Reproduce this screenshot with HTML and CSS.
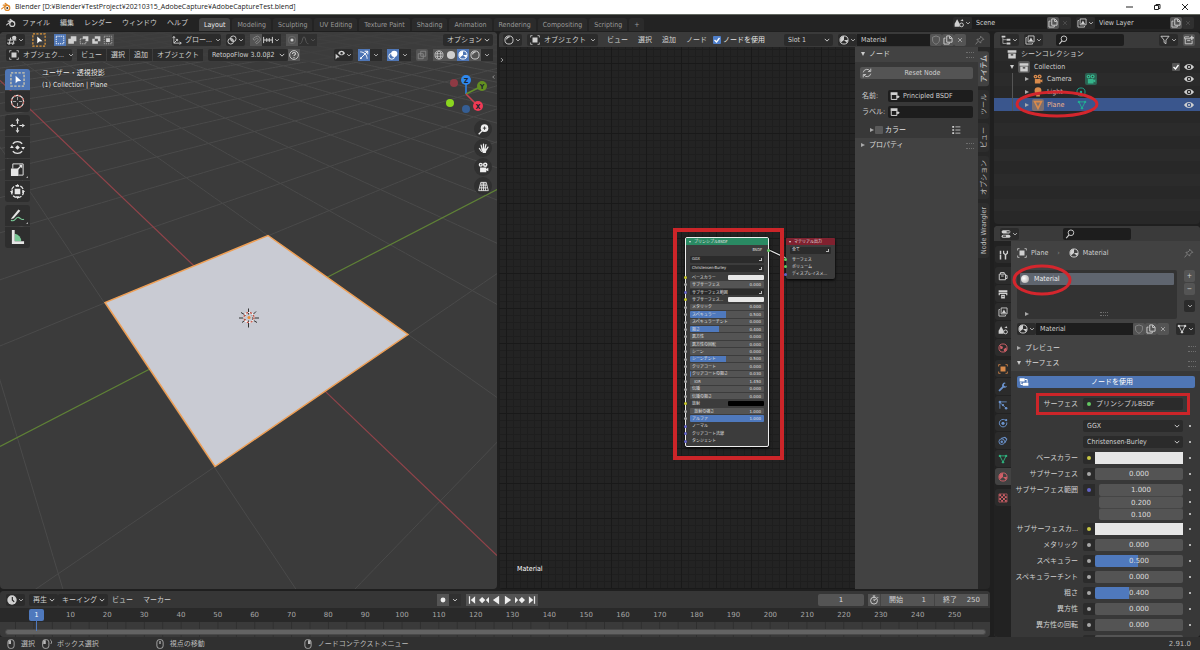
FILE: index.html
```html
<!DOCTYPE html>
<html lang="ja">
<head>
<meta charset="utf-8">
<title>Blender</title>
<link rel="stylesheet" href="styles.css">
</head>
<body>
<svg class="defs" aria-hidden="true">
  <symbol id="logo" viewBox="0 0 16 16"><path d="M1 11 8.500 5H3.500M6.500 2l6.500 4.800" fill="none" stroke="currentColor" stroke-width="1.800" stroke-linecap="round"/><circle cx="10" cy="9.500" r="4" fill="none" stroke="currentColor" stroke-width="2"/><circle cx="10" cy="9.500" r="1.600" class="hole"/></symbol>
  <symbol id="chev" viewBox="0 0 16 16"><path d="M3 5.500l5 5 5-5" fill="none" stroke="currentColor" stroke-width="2.200"/></symbol>
  <symbol id="view3d" viewBox="0 0 16 16"><path d="M1 8h14M0 13h12M6 4 3 16M11 9l-2 7" fill="none" stroke="currentColor" stroke-width="1.600"/><circle cx="11.500" cy="4.500" r="3.500" fill="currentColor"/></symbol>
  <symbol id="cursorbox" viewBox="0 0 16 16"><path d="M1 1h14v14H1z" fill="none" stroke="currentColor" stroke-width="1.400" stroke-dasharray="2.500 1.500"/><path d="M6 4v8l2.300-2.200L12 9.500z" fill="#fff"/></symbol>
  <symbol id="selbox" viewBox="0 0 16 16"><path d="M2 2h12v12H2z" fill="none" stroke="currentColor" stroke-width="1.500" stroke-dasharray="2 1.500"/></symbol>
  <symbol id="selext" viewBox="0 0 16 16"><path d="M6 2h9v8h-4v4H2V6h4z" fill="currentColor"/></symbol>
  <symbol id="selsub" viewBox="0 0 16 16"><path d="M6 2h9v8h-4V6H6z" fill="currentColor"/><path d="M2 6h9v8H2z" fill="none" stroke="currentColor" stroke-width="1.300" stroke-dasharray="2 1.500"/></symbol>
  <symbol id="selinv" viewBox="0 0 16 16"><path fill-rule="evenodd" d="M6 2h9v8h-4v4H2V6h4zM6 6v4h5V6z" fill="currentColor"/></symbol>
  <symbol id="selint" viewBox="0 0 16 16"><path d="M2 2h12v12H2z" fill="none" stroke="currentColor" stroke-dasharray="2 1.500"/><path d="M5 5h6v6H5z" fill="currentColor"/></symbol>
  <symbol id="axes" viewBox="0 0 16 16"><path d="M3 3v10h11M3 13 9 7M1 5l2-3 2 3M12 11l3 2-3 2M6 7h3v3" fill="none" stroke="currentColor" stroke-width="1.400"/></symbol>
  <symbol id="pivot" viewBox="0 0 16 16"><circle cx="6" cy="10" r="4.500" fill="none" stroke="currentColor" stroke-width="1.500"/><circle cx="10" cy="6" r="4.500" fill="none" stroke="currentColor" stroke-width="1.500"/><circle cx="8" cy="8" r="1.500" fill="currentColor"/></symbol>
  <symbol id="magnet" viewBox="0 0 16 16"><path d="M3 6l4-3a5 5 0 0 1 6 8l-4 3-2-2 4-3.500a2 2 0 0 0-2.500-3L5 8.500z" fill="none" stroke="currentColor" stroke-width="1.400"/></symbol>
  <symbol id="snapinc" viewBox="0 0 16 16"><path d="M1 3v10M15 3v10M6 5v6M10 5v6M1 8h14" fill="none" stroke="currentColor" stroke-width="1.600"/></symbol>
  <symbol id="prop" viewBox="0 0 16 16"><circle cx="8" cy="8" r="6" fill="none" stroke="#6c6c6c" stroke-width="1.500"/><circle cx="8" cy="8" r="2.500" fill="currentColor"/></symbol>
  <symbol id="lightdata" viewBox="0 0 16 16"><circle cx="8" cy="8" r="6.500" fill="none" stroke="currentColor" stroke-width="1.400"/><circle cx="8" cy="8" r="2" fill="currentColor"/></symbol>
  <symbol id="falloff" viewBox="0 0 16 16"><path d="M1 14c5 0 4-11 7-11s2 11 7 11" fill="none" stroke="currentColor" stroke-width="1.500"/></symbol>
  <symbol id="object" viewBox="0 0 16 16"><path d="M4 4h8v8H4z" fill="currentColor"/><path d="M1 4V1h3M12 1h3v3M15 12v3h-3M4 15H1v-3" fill="none" stroke="currentColor" stroke-width="1.200"/></symbol>
  <symbol id="help" viewBox="0 0 16 16"><circle cx="8" cy="8" r="7" fill="none" stroke="currentColor" stroke-width="1.400"/><path d="M5.500 6.500c0-3.500 5-3 5-.5 0 1.800-2.500 1.800-2.500 3.500M8 11v2" fill="none" stroke="currentColor" stroke-width="1.700"/></symbol>
  <symbol id="eye" viewBox="0 0 16 16"><path fill-rule="evenodd" d="M0 8c4-6.500 12-6.500 16 0-4 6.500-12 6.500-16 0zm8-3.500a3.500 3.500 0 1 0 0 7 3.500 3.500 0 0 0 0-7z" fill="currentColor"/><circle cx="8" cy="8" r="1.700" fill="currentColor"/></symbol>
  <symbol id="visib" viewBox="0 0 16 16"><path fill-rule="evenodd" d="M5 5c3-5 8-5 11 0-3 4.500-8 4.500-11 0zm5.500-2a2 2 0 1 0 0 4 2 2 0 0 0 0-4z" fill="currentColor"/><path d="M1 6v9l2.500-3 4-.500z" fill="currentColor"/></symbol>
  <symbol id="gizmo" viewBox="0 0 16 16"><path d="M2 3c6 0 11 5 11 11M2 14 14 2M9 2h5v5" fill="none" stroke="currentColor" stroke-width="1.500"/><circle cx="3" cy="13" r="1.500" fill="currentColor"/></symbol>
  <symbol id="overlay" viewBox="0 0 16 16"><circle cx="6" cy="10" r="4.700" fill="none" stroke="currentColor" stroke-width="1.500"/><circle cx="10" cy="6" r="5" fill="currentColor"/></symbol>
  <symbol id="xray" viewBox="0 0 16 16"><path d="M2 6h8v8H2zM6 2h8v8H6z" fill="none" stroke="currentColor" stroke-width="1.300"/></symbol>
  <symbol id="wire" viewBox="0 0 16 16"><g fill="none" stroke="currentColor" stroke-width="1.200"><circle cx="8" cy="8" r="6.500"/><ellipse cx="8" cy="8" rx="3" ry="6.500"/><path d="M2 6h12M2 10h12"/></g></symbol>
  <symbol id="solid" viewBox="0 0 16 16"><circle cx="8" cy="8" r="6.500" fill="currentColor"/></symbol>
  <symbol id="matball" viewBox="0 0 16 16"><circle cx="8" cy="8" r="6.500" fill="none" stroke="currentColor" stroke-width="1.500"/><path d="M8 1.500A6.500 6.500 0 0 0 3 12l5-4zM8 8l4.500 4.500A6.500 6.500 0 0 0 14.500 8z" fill="currentColor"/></symbol>
  <symbol id="render" viewBox="0 0 16 16"><circle cx="8" cy="8" r="6.500" fill="none" stroke="currentColor" stroke-width="1.500"/><path d="M4 7a5 5 0 0 1 5-4" fill="none" stroke="currentColor" stroke-width="1.800"/></symbol>
  <symbol id="copy" viewBox="0 0 16 16"><path d="M6 1.500h5l3.500 3.500v6.500H6zM10.500 2v3.500H14M4 5H1.500v9.500H10V12" fill="none" stroke="currentColor" stroke-width="1.500"/></symbol>
  <symbol id="x" viewBox="0 0 16 16"><path d="M3 3l10 10M13 3 3 13" stroke="currentColor" stroke-width="1.700"/></symbol>
  <symbol id="pin" viewBox="0 0 16 16"><path d="M9 2l5 5-2 .500-2.500 3L9 13 3 7l3-.500L9 4zM5 10l-4 5" fill="none" stroke="currentColor" stroke-width="1.300"/></symbol>
  <symbol id="shield" viewBox="0 0 16 16"><path d="M8 1.500l5.500 2V8c0 3-2 5-5.500 7C4.500 13 2.500 11 2.500 8V3.500z" fill="none" stroke="currentColor" stroke-width="1.300"/></symbol>
  <symbol id="scene" viewBox="0 0 16 16"><path d="M5 2l4 7v5H1V9z" fill="currentColor"/><circle cx="12" cy="11" r="3" fill="none" stroke="currentColor" stroke-width="1.500"/><path d="M10 4l4-2 1 3z" fill="currentColor"/></symbol>
  <symbol id="layers" viewBox="0 0 16 16"><path d="M5 1.500h9.500V11H5zM3 4H1.500v10.500H12V13" fill="none" stroke="currentColor" stroke-width="1.400"/><path d="M6 10l3.500-6L13 10z" fill="currentColor"/></symbol>
  <symbol id="tree" viewBox="0 0 16 16"><path d="M1 1h6v3H1zM9 6h6v3H9zM9 12h6v3H9z" fill="currentColor"/><path d="M3 4v9.500h6M3 7.500h6" fill="none" stroke="currentColor"/></symbol>
  <symbol id="search" viewBox="0 0 16 16"><circle cx="9.500" cy="6" r="4.500" fill="none" stroke="currentColor" stroke-width="1.500"/><path d="M6.500 9.500 2 14.500" stroke="currentColor" stroke-width="1.800"/></symbol>
  <symbol id="filter" viewBox="0 0 16 16"><path d="M1.500 2h13L9.500 8v6l-3-2V8z" fill="none" stroke="currentColor" stroke-width="1.400"/></symbol>
  <symbol id="box" viewBox="0 0 16 16"><path d="M1 2h14v4H1zM2 7h12v8H2z" fill="currentColor"/><path d="M6 9.500h4" stroke="#333" stroke-width="2"/></symbol>
  <symbol id="newbox" viewBox="0 0 16 16"><path d="M8 3H1v3h9M2 6v8h11v-5M5 9h5" fill="none" stroke="currentColor" stroke-width="1.400"/><path d="M12.500 1v7M9 4.500h7" stroke="currentColor" stroke-width="2"/></symbol>
  <symbol id="camera" viewBox="0 0 16 16"><circle cx="4" cy="4" r="3" fill="currentColor"/><circle cx="10.500" cy="4" r="3.300" fill="currentColor"/><path d="M3 8h9v2l3-1.500v5L12 12v3H3z" fill="currentColor"/><circle cx="4" cy="4" r="1" class="hole"/><circle cx="10.500" cy="4" r="1.200" class="hole"/></symbol>
  <symbol id="bulb" viewBox="0 0 16 16"><circle cx="8" cy="6" r="5.500" fill="currentColor"/><path d="M5 12h6v3H5z" fill="currentColor"/></symbol>
  <symbol id="mesh" viewBox="0 0 16 16"><path d="M3 3h10L8 13z" fill="none" stroke="currentColor" stroke-width="1.500"/><circle cx="3" cy="3" r="1.900" fill="currentColor"/><circle cx="13" cy="3" r="1.900" fill="currentColor"/><circle cx="8" cy="13" r="1.900" fill="currentColor"/></symbol>
  <symbol id="tri" viewBox="0 0 16 16"><path d="M2.500 2.500h11L8 13.500z" fill="none" stroke="currentColor" stroke-width="2.600"/></symbol>
  <symbol id="props" viewBox="0 0 16 16"><rect x="1" y="2" width="14" height="5" rx="2.500" fill="currentColor"/><rect x="1" y="9" width="14" height="5" rx="2.500" fill="currentColor"/><path d="M9 4.500h5M3 11.500h5" stroke="#333" stroke-width="2"/></symbol>
  <symbol id="tools" viewBox="0 0 16 16"><path d="M4 1v6M4 8v7M12 7v8" stroke="currentColor" stroke-width="2.400"/><path d="M9 1v4l3 2.500L15 5V1" fill="none" stroke="currentColor" stroke-width="2"/></symbol>
  <symbol id="rendercam" viewBox="0 0 16 16"><path d="M2 5h10v9H2zM12 7h2.500v5H12M4 5V2.500h6V5M5 8h4" fill="none" stroke="currentColor" stroke-width="1.500"/></symbol>
  <symbol id="printer" viewBox="0 0 16 16"><path d="M1 2h14v3H1zM1 6h14v4h-2V8H3v2H1zM5 9h6v6H5z" fill="currentColor"/><path d="M6 12h4" stroke="#333"/></symbol>
  <symbol id="world" viewBox="0 0 16 16"><circle cx="8" cy="8" r="6.500" fill="none" stroke="currentColor" stroke-width="1.500"/><path d="M3 4l5 2-1 3-3 1zM9 10l4-3 1 4-4 3z" fill="currentColor"/></symbol>
  <symbol id="wrench" viewBox="0 0 16 16"><path d="M2.500 13.500 9 7" stroke="currentColor" stroke-width="3" stroke-linecap="round"/><path d="M12.500 1.500A4 4 0 1 0 14.500 6L12 7 9.500 6V3.500z" fill="currentColor"/></symbol>
  <symbol id="particles" viewBox="0 0 16 16"><path d="M3 14V4l10 9M4 3h10" fill="none" stroke="currentColor" stroke-width="1.300"/><circle cx="3" cy="3" r="2" fill="currentColor"/><circle cx="8" cy="8" r="1.800" fill="currentColor"/><circle cx="13" cy="13" r="2" fill="currentColor"/></symbol>
  <symbol id="physics" viewBox="0 0 16 16"><path d="M11 3a6 6 0 1 0 3 4" fill="none" stroke="currentColor" stroke-width="1.500"/><circle cx="8" cy="8.500" r="2.500" fill="currentColor"/><circle cx="13" cy="3.500" r="1.800" fill="currentColor"/></symbol>
  <symbol id="constraint" viewBox="0 0 16 16"><circle cx="6" cy="9" r="4.500" fill="none" stroke="currentColor" stroke-width="1.500"/><circle cx="6" cy="9" r="2" fill="currentColor"/><path d="M5 4l6-2 3 3-3 6" fill="none" stroke="currentColor" stroke-width="1.700"/></symbol>
  <symbol id="checker" viewBox="0 0 16 16"><path d="M1.500 1.500h13v13h-13z" fill="none" stroke="currentColor"/><path d="M2 2h3v3H2zM8 2h3v3H8zM5 5h3v3H5zM11 5h3v3h-3zM2 8h3v3H2zM8 8h3v3H8zM5 11h3v3H5zM11 11h3v3h-3z" fill="currentColor"/></symbol>
  <symbol id="node" viewBox="0 0 16 16"><path d="M2 5.500h9v8H2z" fill="none" stroke="currentColor" stroke-width="1.600"/><path d="M1 2h11v4H1z" fill="currentColor"/><path d="M11 9h4" stroke="currentColor" stroke-width="2"/><circle cx="12.500" cy="9" r="2" fill="currentColor"/></symbol>
  <symbol id="nodes" viewBox="0 0 16 16"><path d="M1 2h8v5H1zM6 9h9v5H6z" fill="currentColor"/><path d="M9 4h4v5M6 12H3V8" fill="none" stroke="currentColor" stroke-width="1.600"/></symbol>
  <symbol id="refresh" viewBox="0 0 16 16"><path d="M2 7a6 6 0 0 1 11-2M14 9a6 6 0 0 1-11 2M14 1v4.500H9.500M2 15v-4.500h4.500" fill="none" stroke="currentColor" stroke-width="1.400"/></symbol>
  <symbol id="list" viewBox="0 0 16 16"><path d="M2 3h3M2 8h3M2 13h3" stroke="currentColor" stroke-width="2.500"/><path d="M7 3h8M7 8h8M7 13h8" stroke="currentColor" stroke-width="1.300"/></symbol>
  <symbol id="move" viewBox="0 0 16 16"><path d="M8 0l2 3H6zM8 16l2-3H6zM0 8l3-2v4zM16 8l-3-2v4z" fill="currentColor"/><path d="M8 3v3M8 10v3M3 8h3M10 8h3" stroke="currentColor" stroke-width="1.300"/></symbol>
  <symbol id="rotate" viewBox="0 0 16 16"><path d="M3 4a6.500 6.500 0 0 1 10 0M3 12a6.500 6.500 0 0 0 10 0" fill="none" stroke="currentColor" stroke-width="1.300"/><path d="M8 5.500 10.500 8 8 10.500 5.500 8zM0 8.500l2-3 2 3zM12 7.500h4l-2 3z" fill="currentColor"/></symbol>
  <symbol id="scale" viewBox="0 0 16 16"><path d="M3 7V2h11v12H9" fill="none" stroke="currentColor"/><path d="M1 7h8v8H1zM13 3v4L9.500 3z" fill="currentColor"/><path d="M8 8l4-4" stroke="currentColor" stroke-width="1.300"/></symbol>
  <symbol id="transform" viewBox="0 0 16 16"><circle cx="8" cy="8" r="6.500" fill="none" stroke="currentColor" stroke-width="1.300" stroke-dasharray="4 1.500"/><path d="M5 5h6v6H5zM8 0l2 3H6zM8 16l2-3H6zM0 8l3-2v4zM16 8l-3-2v4z" fill="currentColor"/></symbol>
  <symbol id="annotate" viewBox="0 0 16 16"><path d="M2 10 9 1.500l2 1.500-7 8-3 1z" fill="currentColor"/><path d="M1 13c4 3 5-4 8-3s2 3 6 2" fill="none" stroke="#79c695" stroke-width="1.200"/></symbol>
  <symbol id="measure" viewBox="0 0 16 16"><path d="M5 4a8 8 0 0 1 7 8H5z" fill="#79c695"/><path d="M2 0h3v12h10v3H2z" fill="currentColor"/></symbol>
  <symbol id="crosshair" viewBox="0 0 16 16"><circle cx="8" cy="8" r="6.500" fill="none" stroke="#e8e8e8" stroke-width="1.300"/><circle cx="8" cy="8" r="6.500" fill="none" stroke="#c86a62" stroke-width="1.300" stroke-dasharray="2.500 2.600"/><path d="M8 3v3.500M8 9.500V13M3 8h3.500M9.500 8H13" stroke="#aaa"/></symbol>
  <symbol id="zoomin" viewBox="0 0 16 16"><circle cx="9.500" cy="6" r="5.500" fill="currentColor"/><path d="M6 10l-5 5" stroke="currentColor" stroke-width="2"/><path d="M9.500 3.500v5M7 6h5" stroke="#333" stroke-width="1.300"/></symbol>
  <symbol id="hand" viewBox="0 0 16 16"><path d="M5 12 2 8M6 9 4.500 3M8 8V1.500M10 9l1.500-6.500M12 10l2.500-4" stroke="currentColor" stroke-width="1.800" stroke-linecap="round"/><path d="M4.500 8h8l-1 6.500H7z" fill="currentColor"/></symbol>
  <symbol id="persp" viewBox="0 0 16 16"><path d="M4 2h8l3 12H1zM8 2v12M3 6h10M2 10h12M6 2 5 14M10 2l1 12" fill="none" stroke="currentColor" stroke-width="1.200"/></symbol>
  <symbol id="clock" viewBox="0 0 16 16"><circle cx="8" cy="8" r="7.500" fill="currentColor"/><path d="M8.500 3v5l3 3" fill="none" stroke="#222" stroke-width="1.800"/></symbol>
  <symbol id="stopwatch" viewBox="0 0 16 16"><circle cx="8" cy="9" r="5.500" fill="none" stroke="currentColor" stroke-width="1.500"/><path d="M6 1.500h4M8 2v2M8 9l3-2.500M13 3l1.500 1.500M8 6v3" stroke="currentColor" stroke-width="1.500"/></symbol>
  <symbol id="jumpstart" viewBox="0 0 16 16"><path d="M3 2h2v12H3zM13 2v12L6 8z" fill="currentColor"/></symbol>
  <symbol id="keyprev" viewBox="0 0 16 16"><path d="M5 3l5 5-5 5-5-5zM16 3v10l-5-5z" fill="currentColor"/></symbol>
  <symbol id="playback" viewBox="0 0 16 16"><path d="M13 1v14L3 8z" fill="currentColor"/></symbol>
  <symbol id="mouseL" viewBox="0 0 16 16"><rect x="3" y="1" width="10" height="14" rx="4" fill="none" stroke="currentColor" stroke-width="1.300"/><path d="M4 2h4v6H4z" fill="currentColor"/></symbol>
  <symbol id="mousedrag" viewBox="0 0 16 16"><rect x="1" y="1" width="10" height="14" rx="4" fill="none" stroke="currentColor" stroke-width="1.300"/><path d="M2 2h4v6H2z" fill="currentColor"/><path d="M13 1c3 2 3 5 1 7" fill="none" stroke="currentColor" stroke-width="1.300"/></symbol>
  <symbol id="mouseM" viewBox="0 0 16 16"><rect x="3" y="1" width="10" height="14" rx="4" fill="none" stroke="currentColor" stroke-width="1.300"/><path d="M7 3h2v5H7z" fill="currentColor"/></symbol>
</svg>

<header class="titlebar">
  <svg class="ic orange"><use href="#logo"/></svg>
  <span class="title">Blender [D:¥Blender¥TestProject¥20210315_AdobeCapture¥AdobeCaptureTest.blend]</span>
  <button class="win" aria-label="最小化"><svg viewBox="0 0 8 8"><path d="M1 4h7"/></svg></button>
  <button class="win" aria-label="元に戻す"><svg viewBox="0 0 8 8"><path d="M1.500 2.500h4v4h-4zM3 2.500v-1h4v4H6"/></svg></button>
  <button class="win" aria-label="閉じる"><svg viewBox="0 0 8 8"><path d="M1 1l6 6M7 1 1 7"/></svg></button>
</header>

<nav class="topbar">
  <button class="logo-btn" aria-label="Blender"><svg class="ic"><use href="#logo"/></svg></button>
  <button class="menu">ファイル</button><button class="menu">編集</button><button class="menu">レンダー</button><button class="menu">ウィンドウ</button><button class="menu">ヘルプ</button>
  <div class="workspaces">
    <button class="ws on">Layout</button><button class="ws">Modeling</button><button class="ws">Sculpting</button><button class="ws">UV Editing</button><button class="ws">Texture Paint</button><button class="ws">Shading</button><button class="ws">Animation</button><button class="ws">Rendering</button><button class="ws">Compositing</button><button class="ws">Scripting</button><button class="ws">+</button>
  </div>
  <div class="idblock">
    <button class="b pair" aria-label="シーン"><svg class="ic"><use href="#scene"/></svg><svg class="ch"><use href="#chev"/></svg></button><input class="field" aria-label="シーン名" value="Scene"><button class="b lit sq" aria-label="新規シーン"><svg class="ic"><use href="#copy"/></svg></button><button class="b sq dim" aria-label="シーン削除"><svg class="ch"><use href="#x"/></svg></button>
  </div>
  <div class="idblock">
    <button class="b pair" aria-label="ビューレイヤー"><svg class="ic"><use href="#layers"/></svg><svg class="ch"><use href="#chev"/></svg></button><input class="field" aria-label="レイヤー名" value="View Layer"><button class="b lit sq" aria-label="新規レイヤー"><svg class="ic"><use href="#copy"/></svg></button><button class="b sq dim" aria-label="レイヤー削除"><svg class="ch"><use href="#x"/></svg></button>
  </div>
</nav>

<div class="work">
  <div class="left">
    <div class="editors">
      <section class="area viewport">
        <svg class="scene" viewBox="0 32 497 558" preserveAspectRatio="xMidYMid slice">
          <g id="floor"></g>
          <path d="M0 81 497 556" stroke="#91434a" stroke-width="1.200"/>
          <path d="M0 447 497 190" stroke="#5f8236" stroke-width="1.200"/>
          <path d="M268 236 408 335 215 467 105 303z" fill="#c9cbd3" stroke="#ee9f55" stroke-width="1.500"/>
          <path d="M241 313l5 3M252 320l5 3M242 323l4-3M252 316l4-4M248.500 309v6M248.500 321v7M239 318.500h6M252 318.500h7" stroke="#333" stroke-width="1"/>
          <circle cx="249" cy="318" r="5" fill="none" stroke="#fff" stroke-width="1.200"/><circle cx="249" cy="318" r="5" fill="none" stroke="#c34b3c" stroke-width="1.200" stroke-dasharray="2 2"/>
          <circle cx="249" cy="318" r="1.500" fill="#ee8a35"/>
        </svg>
        <div class="bar">
          <button class="b pair" aria-label="エディタータイプ"><svg class="ic"><use href="#view3d"/></svg><svg class="ch"><use href="#chev"/></svg></button>
          <button class="toolsel" aria-label="ボックス選択"><svg><use href="#cursorbox"/></svg></button>
          <div class="group modes"><button class="b sq blue" aria-label="設定"><svg class="ic"><use href="#selbox"/></svg></button><button class="b sq lit" aria-label="延長"><svg class="ic"><use href="#selext"/></svg></button><button class="b sq lit" aria-label="減算"><svg class="ic"><use href="#selsub"/></svg></button><button class="b sq lit" aria-label="反転"><svg class="ic"><use href="#selinv"/></svg></button><button class="b sq lit" aria-label="交差"><svg class="ic"><use href="#selint"/></svg></button></div>
          <button class="b orient"><svg class="ic"><use href="#axes"/></svg><span>グロー...</span><svg class="ch"><use href="#chev"/></svg></button>
          <button class="b pair" aria-label="ピボット"><svg class="ic"><use href="#pivot"/></svg><svg class="ch"><use href="#chev"/></svg></button>
          <div class="group"><button class="b sq lit muted" aria-label="スナップ"><svg class="ic"><use href="#magnet"/></svg></button><button class="b pair" aria-label="スナップ先"><svg class="ic"><use href="#snapinc"/></svg><svg class="ch"><use href="#chev"/></svg></button></div>
          <div class="group"><button class="b sq lit" aria-label="プロポーショナル編集"><svg class="ic"><use href="#prop"/></svg></button><button class="b pair dim" aria-label="減衰"><svg class="ic"><use href="#falloff"/></svg><svg class="ch"><use href="#chev"/></svg></button></div>
          <select class="sel push options" aria-label="オプション"><option>オプション</option></select>
        </div>
        <div class="bar second">
          <button class="b mode"><svg class="ic"><use href="#object"/></svg><span>オブジェク...</span><svg class="ch"><use href="#chev"/></svg></button>
          <div class="group menus"><button class="b">ビュー</button><button class="b">選択</button><button class="b">追加</button><button class="b">オブジェクト</button></div>
          <div class="group"><select class="sel retopo" aria-label="RetopoFlow"><option>RetopoFlow 3.0.0β2</option></select><button class="b sq lit" aria-label="ヘルプ"><svg class="ic"><use href="#help"/></svg></button></div>
          <button class="b pair push" aria-label="表示"><svg class="ic"><use href="#visib"/></svg><svg class="ch"><use href="#chev"/></svg></button>
          <div class="group"><button class="b sq blue" aria-label="ギズモ"><svg class="ic"><use href="#gizmo"/></svg></button><button class="b sq" aria-label="ギズモ設定"><svg class="ch"><use href="#chev"/></svg></button></div>
          <div class="group"><button class="b sq blue" aria-label="オーバーレイ"><svg class="ic"><use href="#overlay"/></svg></button><button class="b sq" aria-label="オーバーレイ設定"><svg class="ch"><use href="#chev"/></svg></button></div>
          <button class="b sq lit muted" aria-label="透過"><svg class="ic"><use href="#xray"/></svg></button>
          <div class="group"><button class="b sq lit" aria-label="ワイヤー"><svg class="ic"><use href="#wire"/></svg></button><button class="b sq lit" aria-label="ソリッド"><svg class="ic"><use href="#solid"/></svg></button><button class="b sq blue" aria-label="マテリアル"><svg class="ic"><use href="#matball"/></svg></button><button class="b sq lit" aria-label="レンダー"><svg class="ic"><use href="#render"/></svg></button><button class="b sq" aria-label="シェーディング設定"><svg class="ch"><use href="#chev"/></svg></button></div>
        </div>
        <div class="stage">
          <div class="tools">
            <div class="toolgroup"><button class="tool on" aria-label="選択"><svg><use href="#cursorbox"/></svg></button><button class="tool" aria-label="カーソル"><svg><use href="#crosshair"/></svg></button></div>
            <div class="toolgroup"><button class="tool" aria-label="移動"><svg><use href="#move"/></svg></button><button class="tool" aria-label="回転"><svg><use href="#rotate"/></svg></button><button class="tool more" aria-label="拡大縮小"><svg><use href="#scale"/></svg></button><button class="tool" aria-label="トランスフォーム"><svg><use href="#transform"/></svg></button></div>
            <div class="toolgroup"><button class="tool more" aria-label="アノテート"><svg><use href="#annotate"/></svg></button><button class="tool" aria-label="メジャー"><svg><use href="#measure"/></svg></button></div>
          </div>
          <div class="viewinfo"><div>ユーザー・透視投影</div><div>(1) Collection | Plane</div></div>
          <div class="navs">
            <svg class="gizmo" viewBox="445 72 44 42">
              <path d="M466 94V80" stroke="#2e83e6" stroke-width="1.600"/><path d="M466 94l16-8" stroke="#648f2c" stroke-width="1.600"/><path d="M466 94l12 12" stroke="#c8414f" stroke-width="1.600"/>
              <circle cx="454" cy="83" r="4" fill="#8e3a44"/><circle cx="450" cy="103" r="4" fill="#8bd61f"/><circle cx="466" cy="109" r="4" fill="#355e94"/>
              <circle cx="466" cy="80" r="5" fill="#2e88ee"/><circle cx="482" cy="86" r="5" fill="#648f20"/><circle cx="478" cy="106" r="5" fill="#f03a55"/>
              <text x="466" y="83">Z</text><text x="482" y="89">Y</text><text x="478" y="109">X</text>
            </svg>
            <button class="round" aria-label="ズーム"><svg><use href="#zoomin"/></svg></button><button class="round" aria-label="移動"><svg><use href="#hand"/></svg></button><button class="round" aria-label="カメラ"><svg><use href="#camera"/></svg></button><button class="round" aria-label="透視投影"><svg><use href="#persp"/></svg></button>
          </div>
          <svg class="edge right"><use href="#chev"/></svg>
        </div>
      </section>

      <section class="area nodes">
        <div class="bar">
          <button class="b pair" aria-label="シェーダーエディター"><svg class="ic"><use href="#render"/></svg><svg class="ch"><use href="#chev"/></svg></button>
          <button class="b mode wide"><svg class="ic"><use href="#object"/></svg><span>オブジェクト</span><svg class="ch"><use href="#chev"/></svg></button>
          <div class="flatmenus"><button>ビュー</button><button>選択</button><button>追加</button><button>ノード</button></div>
          <label class="check"><input type="checkbox" checked>ノードを使用</label>
          <select class="sel slot" aria-label="スロット"><option>Slot 1</option></select>
          <div class="idblock mat">
            <button class="b pair" aria-label="マテリアル"><svg class="ic"><use href="#matball"/></svg><svg class="ch"><use href="#chev"/></svg></button><input class="field" aria-label="マテリアル名" value="Material"><button class="b lit sq muted" aria-label="フェイクユーザー"><svg class="ic"><use href="#shield"/></svg></button><button class="b lit sq" aria-label="複製"><svg class="ic"><use href="#copy"/></svg></button><button class="b lit sq" aria-label="解除"><svg class="ch"><use href="#x"/></svg></button>
          </div>
          <svg class="ic pinned"><use href="#pin"/></svg>
        </div>
        <div class="nodebody">
          <div class="canvas">
            <svg class="edge left"><use href="#chev"/></svg>
            <svg class="link" viewBox="0 0 20 10"><path d="M1 1l17 8" stroke="#111" stroke-width="3"/><path d="M1 1l17 8" stroke="#e4e4e4" stroke-width="1.300"/></svg>
            <article class="node principled">
              <h3>プリンシプルBSDF</h3>
              <div class="out">BSDF</div>
              <div class="drop">GGX</div><div class="drop">Christensen-Burley</div>
              <div class="rows">
                <div class="r col y"><span>ベースカラー</span><i></i></div>
                <div class="r v"><span>サブサーフェス</span><b>0.000</b></div>
                <div class="r dd p"><span>サブサーフェス範囲</span></div>
                <div class="r col y"><span>サブサーフェス...</span><i></i></div>
                <div class="r v"><span>メタリック</span><b>0.000</b></div>
                <div class="r v" style="--v:49%"><span>スペキュラー</span><b>0.500</b></div>
                <div class="r v"><span>スペキュラーチント</span><b>0.000</b></div>
                <div class="r v" style="--v:39%"><span>粗さ</span><b>0.400</b></div>
                <div class="r v"><span>異方性</span><b>0.000</b></div>
                <div class="r v"><span>異方性の回転</span><b>0.000</b></div>
                <div class="r v"><span>シーン</span><b>0.000</b></div>
                <div class="r v" style="--v:49%"><span>シーンチント</span><b>0.500</b></div>
                <div class="r v"><span>クリアコート</span><b>0.000</b></div>
                <div class="r v" style="--v:2%"><span>クリアコートの粗さ</span><b>0.030</b></div>
                <div class="r v"><span>&nbsp; IOR</span><b>1.450</b></div>
                <div class="r v"><span>伝播</span><b>0.000</b></div>
                <div class="r v"><span>伝播の粗さ</span><b>0.000</b></div>
                <div class="r col y black"><span>放射</span><i></i></div>
                <div class="r v"><span>&nbsp; 放射の強さ</span><b>1.000</b></div>
                <div class="r v" style="--v:100%"><span>アルファ</span><b>1.000</b></div>
                <div class="r p"><span>ノーマル</span></div>
                <div class="r p"><span>クリアコート法線</span></div>
                <div class="r p"><span>タンジェント</span></div>
              </div>
            </article>
            <article class="node output">
              <h3>マテリアル出力</h3>
              <div class="drop">全て</div>
              <div class="rows"><div class="r g"><span>サーフェス</span></div><div class="r g"><span>ボリューム</span></div><div class="r p"><span>ディスプレイスメ...</span></div></div>
            </article>
            <div class="mark markbox"></div>
            <div class="matname">Material</div>
          </div>
          <aside class="side">
            <h2 class="open">ノード</h2>
            <div class="sidebody">
              <button class="b lit reset"><svg class="ic"><use href="#refresh"/></svg><span>Reset Node</span></button>
              <label class="nrow"><span>名前:</span><span class="iconfield"><svg class="ic"><use href="#node"/></svg><input value="Principled BSDF"></span></label>
              <label class="nrow"><span>ラベル:</span><span class="iconfield"><svg class="ic"><use href="#node"/></svg><input value=""></span></label>
              <div class="colorrow"><i class="arrow"></i><label class="check off"><input type="checkbox">カラー</label><svg class="ic"><use href="#list"/></svg></div>
            </div>
            <h2 class="closed">プロパティ</h2>
          </aside>
          <div class="vtabs"><button class="on">アイテム</button><button>ツール</button><button>ビュー</button><button>オプション</button><button>Node Wrangler</button></div>
        </div>
      </section>
    </div>

    <section class="area timeline">
      <div class="bar">
        <button class="b pair" aria-label="タイムライン"><svg class="ic"><use href="#clock"/></svg><svg class="ch"><use href="#chev"/></svg></button>
        <div class="group"><select class="sel play" aria-label="再生"><option>再生</option></select><select class="sel keying" aria-label="キーイング"><option>キーイング</option></select></div>
        <div class="flatmenus"><button>ビュー</button><button>マーカー</button></div>
        <div class="transport">
          <div class="group"><button class="b lit sq" aria-label="自動キー"><svg class="ch"><use href="#solid"/></svg></button><button class="b sq dim" aria-label="自動キー設定"><svg class="ch"><use href="#chev"/></svg></button></div>
          <div class="group"><button class="b lit sq" aria-label="最初"><svg class="ic"><use href="#jumpstart"/></svg></button><button class="b lit sq" aria-label="前のキー"><svg class="ic"><use href="#keyprev"/></svg></button><button class="b lit sq" aria-label="逆再生"><svg class="ic"><use href="#playback"/></svg></button><button class="b lit sq flip" aria-label="再生"><svg class="ic"><use href="#playback"/></svg></button><button class="b lit sq flip" aria-label="次のキー"><svg class="ic"><use href="#keyprev"/></svg></button><button class="b lit sq flip" aria-label="最後"><svg class="ic"><use href="#jumpstart"/></svg></button></div>
        </div>
        <input class="num frame" aria-label="現在フレーム" value="1">
        <div class="group"><button class="b lit sq" aria-label="プレビュー範囲"><svg class="ic"><use href="#stopwatch"/></svg></button><label class="range">開始<input value="1"></label><label class="range">終了<input value="250"></label></div>
      </div>
      <div class="frames">
        <div class="ruler"><span>10</span><span>20</span><span>30</span><span>40</span><span>50</span><span>60</span><span>70</span><span>80</span><span>90</span><span>100</span><span>110</span><span>120</span><span>130</span><span>140</span><span>150</span><span>160</span><span>170</span><span>180</span><span>190</span><span>200</span><span>210</span><span>220</span><span>230</span><span>240</span><span>250</span></div>
        <div class="track"><div class="scroll"></div></div>
        <div class="playhead">1</div>
      </div>
    </section>
  </div>

  <div class="right">
    <section class="area outliner">
      <div class="bar">
        <button class="b pair" aria-label="アウトライナー"><svg class="ic"><use href="#tree"/></svg><svg class="ch"><use href="#chev"/></svg></button>
        <button class="b pair" aria-label="表示モード"><svg class="ic"><use href="#layers"/></svg><svg class="ch"><use href="#chev"/></svg></button>
        <label class="search"><svg class="ic"><use href="#search"/></svg><input aria-label="検索"></label>
        <button class="b pair filt" aria-label="フィルター"><svg class="ic"><use href="#filter"/></svg><svg class="ch"><use href="#chev"/></svg></button>
        <button class="b sq lit" aria-label="新規コレクション"><svg class="ic"><use href="#newbox"/></svg></button>
      </div>
      <ul class="list">
        <li class="l0"><svg class="ic"><use href="#box"/></svg>シーンコレクション</li>
        <li class="l1"><i class="arrow down"></i><span class="chip"><svg class="ic"><use href="#box"/></svg></span>Collection<input class="vis" type="checkbox" checked aria-label="ビューレイヤーに含む"><svg class="ic"><use href="#eye"/></svg></li>
        <li class="l2"><i class="arrow"></i><svg class="ic kind or"><use href="#camera"/></svg>Camera<span class="chip green data"><svg class="ic"><use href="#camera"/></svg></span><svg class="ic eye"><use href="#eye"/></svg></li>
        <li class="l2"><i class="arrow"></i><svg class="ic kind or"><use href="#bulb"/></svg>Light<svg class="ic teal data"><use href="#lightdata"/></svg><svg class="ic eye"><use href="#eye"/></svg></li>
        <li class="l2 active"><i class="arrow"></i><span class="chip kind or"><svg class="ic"><use href="#tri"/></svg></span><em>Plane</em><svg class="ic teal data"><use href="#mesh"/></svg><svg class="ic eye"><use href="#eye"/></svg><svg class="mark ring" viewBox="0 0 84 28"><ellipse cx="42" cy="14" rx="40" ry="12"/></svg></li>
        <li></li><li></li><li></li><li></li><li></li><li></li><li></li><li></li><li></li>
      </ul>
    </section>

    <section class="area properties">
      <div class="bar">
        <button class="b pair" aria-label="プロパティ"><svg class="ic"><use href="#props"/></svg><svg class="ch"><use href="#chev"/></svg></button>
        <label class="search"><svg class="ic"><use href="#search"/></svg><input aria-label="検索"></label>
      </div>
      <div class="pbody">
        <nav class="ptabs">
          <div><button aria-label="ツール"><svg class="ic"><use href="#tools"/></svg></button></div>
          <div><button aria-label="レンダー"><svg class="ic"><use href="#rendercam"/></svg></button><button aria-label="出力"><svg class="ic"><use href="#printer"/></svg></button><button aria-label="ビューレイヤー"><svg class="ic"><use href="#layers"/></svg></button><button aria-label="シーン"><svg class="ic"><use href="#scene"/></svg></button><button class="red" aria-label="ワールド"><svg class="ic"><use href="#world"/></svg></button></div>
          <div><button class="or" aria-label="オブジェクト"><svg class="ic"><use href="#object"/></svg></button><button class="bl" aria-label="モディファイアー"><svg class="ic"><use href="#wrench"/></svg></button><button class="bl" aria-label="パーティクル"><svg class="ic"><use href="#particles"/></svg></button><button class="bl" aria-label="物理演算"><svg class="ic"><use href="#physics"/></svg></button><button class="bl" aria-label="コンストレイント"><svg class="ic"><use href="#constraint"/></svg></button><button class="gr" aria-label="データ"><svg class="ic"><use href="#mesh"/></svg></button><button class="red on" aria-label="マテリアル"><svg class="ic"><use href="#matball"/></svg></button></div>
          <div><button class="red" aria-label="テクスチャ"><svg class="ic"><use href="#checker"/></svg></button></div>
        </nav>
        <div class="pcontent">
          <div class="crumb"><svg class="ic"><use href="#object"/></svg>Plane<span class="sep">›</span><svg class="ic"><use href="#matball"/></svg>Material<svg class="ic pinned"><use href="#pin"/></svg></div>
          <div class="slots">
            <div class="slotbox"><div class="slotrow"><span class="ball"></span>Material</div><div class="slotfoot"><i class="arrow"></i><i class="grip"></i></div>
              <svg class="mark ring2" viewBox="0 0 60 32"><ellipse cx="30" cy="16" rx="28" ry="14"/></svg></div>
            <div class="slotbtns"><button class="b lit">+</button><button class="b lit">−</button><button class="b gap" aria-label="メニュー"><svg class="ch"><use href="#chev"/></svg></button></div>
          </div>
          <div class="matrow">
            <div class="idblock"><button class="b pair" aria-label="マテリアル"><svg class="ic"><use href="#matball"/></svg><svg class="ch"><use href="#chev"/></svg></button><input class="field" aria-label="マテリアル名" value="Material"><button class="b lit sq muted" aria-label="フェイクユーザー"><svg class="ic"><use href="#shield"/></svg></button><button class="b lit sq" aria-label="複製"><svg class="ic"><use href="#copy"/></svg></button><button class="b lit sq" aria-label="解除"><svg class="ch"><use href="#x"/></svg></button></div>
            <button class="b pair" aria-label="リンク"><svg class="ic"><use href="#mesh"/></svg><svg class="ch"><use href="#chev"/></svg></button>
          </div>
          <h2 class="closed">プレビュー</h2>
          <h2 class="open">サーフェス</h2>
          <div class="surface">
            <button class="b blue usenodes"><svg class="ic"><use href="#nodes"/></svg><span>ノードを使用</span></button>
            <div class="prow first"><label for="surf">サーフェス</label><button class="b surf" id="surf"><i class="dot lime"></i>プリンシプルBSDF</button><div class="mark markrow"></div></div>
            <div class="prow nolabel"><select class="sel" aria-label="分布"><option>GGX</option></select><i class="key"></i></div>
            <div class="prow nolabel"><select class="sel" aria-label="サブサーフェス方式"><option>Christensen-Burley</option></select><i class="key"></i></div>
            <div class="prow"><label for="c1">ベースカラー</label><i class="sock yel"></i><button class="swatch" id="c1"></button><i class="key"></i></div>
            <div class="prow"><label for="f1">サブサーフェス</label><i class="sock"></i><input class="num" id="f1" value="0.000"><i class="key"></i></div>
            <div class="prow triple"><label for="f2">サブサーフェス範囲</label><i class="sock pur"></i><div class="stack"><input class="num" id="f2" value="1.000"><input class="num" aria-label="G" value="0.200"><input class="num" aria-label="B" value="0.100"></div><div class="keys"><i class="key"></i><i class="key"></i><i class="key"></i></div></div>
            <div class="prow"><label for="c2">サブサーフェスカ...</label><i class="sock yel"></i><button class="swatch" id="c2"></button><i class="key"></i></div>
            <div class="prow"><label for="f3">メタリック</label><i class="sock"></i><input class="num" id="f3" value="0.000"><i class="key"></i></div>
            <div class="prow"><label for="f4">スペキュラー</label><i class="sock"></i><input class="num" id="f4" value="0.500" style="--v:49%"><i class="key"></i></div>
            <div class="prow"><label for="f5">スペキュラーチント</label><i class="sock"></i><input class="num" id="f5" value="0.000"><i class="key"></i></div>
            <div class="prow"><label for="f6">粗さ</label><i class="sock"></i><input class="num" id="f6" value="0.400" style="--v:39%"><i class="key"></i></div>
            <div class="prow"><label for="f7">異方性</label><i class="sock"></i><input class="num" id="f7" value="0.000"><i class="key"></i></div>
            <div class="prow"><label for="f8">異方性の回転</label><i class="sock"></i><input class="num" id="f8" value="0.000"><i class="key"></i></div>
            <div class="prow"><label for="f9">シーン</label><i class="sock"></i><input class="num" id="f9" value="0.000"><i class="key"></i></div>
          </div>
        </div>
      </div>
    </section>
  </div>
</div>

<footer class="status">
  <span class="s1"><svg class="ic"><use href="#mouseL"/></svg>選択</span>
  <span class="s2"><svg class="ic"><use href="#mousedrag"/></svg>ボックス選択</span>
  <span class="s3"><svg class="ic"><use href="#mouseM"/></svg>視点の移動</span>
  <span class="s4"><svg class="ic flipx"><use href="#mouseL"/></svg>ノードコンテクストメニュー</span>
  <span class="ver">2.91.0</span>
</footer>
<script src="floor.js"></script>
</body>
</html>
```
FILE: styles.css
```css
* { box-sizing: border-box; }
html { height: 100%; }
body { margin: 0; height: 100vh; display: flex; flex-direction: column; overflow: hidden; background: #1f1f1f; color: #d0d0d0; font: 7px/12px "DejaVu Sans Condensed", "DejaVu Sans", "Noto Sans CJK JP", sans-serif; }
button, input, select { font: inherit; color: inherit; border: 0; margin: 0; padding: 0; background: none; min-width: 0; border-radius: 0; }
button { display: flex; align-items: center; justify-content: center; white-space: nowrap; }
h2, h3, ul { margin: 0; padding: 0; font: inherit; list-style: none; }
svg { flex: none; display: block; }
.defs { position: absolute; width: 0; height: 0; }
.ic { width: 10px; height: 10px; }
.ch { width: 6px; height: 6px; }
.hole { fill: #333; }
.or { color: #d98a4b; } .bl { color: #6b93cd; } .gr { color: #2fae7c; } .red { color: #cf6068; } .teal { color: #22ad93; }

.titlebar { height: 15px; flex: none; display: flex; align-items: center; background: #fff; color: #222; border-bottom: 1px solid #62675f; font: 7px/14px "Open Sans", sans-serif; padding: 0 1px; }
.orange { color: #e08a2c; }
.title { margin-left: 4px; margin-right: auto; }
.win { width: 28px; height: 14px; }
.win svg { width: 8px; height: 8px; fill: none; stroke: #222; stroke-width: 1; }

.topbar { height: 16px; flex: none; display: flex; align-items: center; background: #232323; padding-right: 6px; }
.logo-btn { width: 22px; }
.menu { padding: 0 5px; }
.menu:nth-of-type(2) { padding-left: 0; }
.workspaces { display: flex; align-self: flex-end; gap: 2px; margin-left: 6px; margin-right: auto; }
.ws { height: 13px; padding: 0 5px; background: #2b2b2b; color: #999; border-radius: 3px 3px 0 0; }
.ws.on { background: #424242; color: #eee; }
.idblock { display: flex; }
.topbar .idblock { margin-left: 5px; }
.topbar .field { width: 75px; }
.field { height: 12px; background: #1d1d1d; padding: 0 4px; }

.b { height: 12px; background: #2b2b2b; border-radius: 2px; }
.sq { width: 12px; flex: none; }
.pair { width: 19px; gap: 1px; flex: none; }
.lit { background: #545454; }
.blue { background: #4f76b5; color: #fff; }
.muted { color: #8c8c8c; }
.dim { color: #5c5c5c; background: #303030; }
.group { display: flex; }
.group > * { border-radius: 0; }
.sel { appearance: none; height: 12px; border-radius: 2px; padding: 0 10px 0 4px; background: #2b2b2b url("data:image/svg+xml,%3Csvg xmlns='http://www.w3.org/2000/svg' viewBox='0 0 8 8'%3E%3Cpath d='M1 2.500l3 3 3-3' fill='none' stroke='%23ccc' stroke-width='1.300'/%3E%3C/svg%3E") no-repeat right 3px center / 6px 6px; }
.push { margin-left: auto; }

.work { flex: 1; min-height: 0; display: flex; gap: 4px; }
.left { flex: 1; min-width: 0; display: flex; flex-direction: column; gap: 2px; }
.right { width: 206px; flex: none; display: flex; flex-direction: column; gap: 2px; padding-top: 1px; }
.editors { flex: 1; min-height: 0; display: flex; gap: 2px; padding-top: 1px; }
.area { border-radius: 4px; overflow: hidden; }
.bar { display: flex; align-items: center; height: 15px; flex: none; background: #3a3a3a; padding: 0 4px; gap: 5px; }

.viewport { flex: 497; min-width: 0; position: relative; display: flex; flex-direction: column; background: #3b3b3b; }
.scene { position: absolute; inset: 0; width: 100%; height: 100%; }
.viewport .bar, .stage { position: relative; }
.viewport .bar { background: #3d3d3dcc; padding: 0 4px 0 6px; }
.toolsel { margin-left: 2px; color: #e0983a; }
.toolsel svg { width: 14px; height: 14px; }
.modes { margin-left: 3px; }
.orient { width: 49px; margin-left: 53px; gap: 3px; }
.options { width: 50px; }
.mode { width: 66px; gap: 4px; padding: 0 3px 0 3px; justify-content: flex-start; }
.mode .ch { margin-left: auto; }
.menus { gap: 1px; }
.menus .b { padding: 0 4px; }
.retopo { width: 80px; }
.stage { flex: 1; padding: 7px 5px; display: flex; align-items: flex-start; }
.tools { width: 25px; display: grid; gap: 3px; }
.toolgroup { display: grid; border-radius: 3px; overflow: hidden; gap: 1px; }
.tool { height: 21px; background: #2e2e2e; color: #e6e6e6; position: relative; }
.tool svg { width: 15px; height: 15px; }
.tool.on { background: #4f76b5; color: #d0c8ae; }
.tool.more::after { content: ""; position: absolute; right: 2px; bottom: 2px; border: 1px solid; border-color: transparent #aaa #aaa transparent; }
.viewinfo { margin-left: 12px; color: #f2f2f2; line-height: 12px; margin-top: -2px; text-shadow: 0 0 1px #000; }
.navs { margin-left: auto; display: grid; justify-items: end; gap: 1px; }
.gizmo { width: 44px; height: 42px; margin: 3px 3px 5px 0; }
.gizmo text { font-size: 7px; font-weight: bold; text-anchor: middle; fill: #1b2430; }
.round { width: 18px; height: 18px; border-radius: 50%; background: #303030; color: #eee; }
.round svg { width: 11px; height: 11px; }
.edge { position: absolute; width: 6px; height: 6px; color: #bbb; }
.edge.right { right: 0; top: 12px; transform: rotate(90deg); }
.edge.left { left: 0; top: 10px; transform: rotate(-90deg); }

.nodes { flex: 491; min-width: 0; display: flex; flex-direction: column; }
.nodes > .bar { padding-right: 1px; }
.mode.wide { width: 71px; }
.flatmenus { display: flex; gap: 10px; margin-left: 4px; }
.check { display: flex; align-items: center; gap: 2px; margin-left: 1px; white-space: nowrap; color: #e6e6e6; }
.check input, .vis { appearance: none; width: 8px; height: 8px; border-radius: 1px; background: #4f7fca url("data:image/svg+xml,%3Csvg xmlns='http://www.w3.org/2000/svg' viewBox='0 0 8 8'%3E%3Cpath d='M1.500 4l2 2 3-4' fill='none' stroke='white' stroke-width='1.300'/%3E%3C/svg%3E") center; }
.check.off input { background: #5a5a5a; }
.slot { width: 49px; margin-left: auto; }
.mat .field { width: 73px; }
.pinned { color: #888; margin: 0 4px; }
.nodebody { flex: 1; min-height: 0; display: flex; }
.canvas { flex: 1; min-width: 0; position: relative; overflow: hidden; background-color: #232323; background-image: linear-gradient(90deg, #191919 1px, transparent 1px), linear-gradient(#191919 1px, transparent 1px), linear-gradient(90deg, #1e1e1e 1px, transparent 1px), linear-gradient(#1e1e1e 1px, transparent 1px); background-size: 35px 35px, 35px 35px, 7px 7px, 7px 7px; background-position: 7px 16px, 7px 16px, 0 2px, 0 2px; }
.matname { position: absolute; left: 18px; bottom: 14px; color: #fff; }
.node { position: absolute; background: #3c3c3c; border-radius: 2px; font-size: 4px; line-height: 6px; color: #e0e0e0; box-shadow: 0 1px 3px #000; }
.node h3 { height: 7px; line-height: 7px; padding-left: 8px; position: relative; border-radius: 1px 1px 0 0; }
.node h3::before { content: ""; position: absolute; left: 3px; top: 3px; border: 1px solid transparent; border-top: 2px solid #ddd; border-bottom: 0; }
.principled { left: 186px; top: 190px; width: 84px; height: 210px; border: 1px solid #eee; display: flex; flex-direction: column; }
.principled h3 { background: #2a8a63; }
.output { left: 287px; top: 191px; width: 49px; height: 41px; display: flex; flex-direction: column; }
.output h3 { background: #80212f; }
.out { text-align: right; padding: 2px 6px 0; height: 11px; position: relative; }
.out::after { content: ""; position: absolute; right: -2px; top: 4px; width: 3px; height: 3px; border-radius: 50%; background: #63c763; }
.drop { margin: 0 4px 2px; padding: 0 2px; height: 7px; background: #2b2b2b; border-radius: 1px; position: relative; }
.drop::after, .dd::after { content: ""; position: absolute; right: 2px; top: 2px; width: 2px; height: 2px; border: solid #bbb; border-width: 0 1px 1px 0; }
.output .drop { margin-top: 2px; }
.rows { flex: 1; display: grid; grid-auto-rows: 1fr; padding: 0 4px 1px; }
.r { position: relative; display: flex; align-items: center; padding: 0 3px 0 2px; margin-bottom: 1px; --s: #a8a8a8; white-space: nowrap; min-height: 0; line-height: 5px; }
.r::before { content: ""; position: absolute; left: -6px; top: 2px; width: 3px; height: 3px; border-radius: 50%; background: var(--s); }
.r b { margin-left: auto; font-weight: normal; font-family: "DejaVu Sans", sans-serif; }
.v { background: linear-gradient(90deg, #4f79bd var(--v, 0%), #545454 var(--v, 0%)); border-radius: 1px; }
.dd { background: #2b2b2b; }
.y { --s: #c7c729; } .p { --s: #6363c7; } .g { --s: #63c763; }
.col i { position: absolute; right: 0; width: 36px; height: 5px; background: #e7e7e7; border-radius: 1px; }
.black i { background: #000; }
.link { position: absolute; left: 269px; top: 202px; width: 20px; height: 10px; }
.mark { position: absolute; border: 4px solid #cc2529; pointer-events: none; }
.markbox { left: 174px; top: 181px; width: 111px; height: 232px; }

.side { width: 123px; flex: none; background: #424242; }
.side h2, .pcontent h2 { height: 15px; line-height: 15px; padding-left: 14px; position: relative; color: #dcdcdc; }
h2::before, .arrow { content: ""; width: 0; height: 0; border: 2px solid transparent; border-left: 4px solid #aaa; border-right: 0; }
h2::before { position: absolute; left: 6px; top: 5px; }
h2.open::before, .arrow.down { border: 2px solid transparent; border-top: 4px solid #ccc; border-bottom: 0; }
h2::after, .grip { content: ""; width: 8px; height: 4px; border: dotted #6e6e6e; border-width: 1px 0; }
h2::after { position: absolute; right: 4px; top: 5px; }
.sidebody { background: #383838; padding: 5px 5px 1px; }
.reset { width: 100%; justify-content: flex-start; padding-left: 2px; margin-bottom: 11px; }
.reset span, .usenodes span { flex: 1; text-align: center; }
.nrow { display: flex; justify-content: space-between; margin: 0 0 4px 2px; }
.iconfield { display: flex; align-items: center; width: 85px; height: 12px; background: #1d1d1d; border-radius: 2px; padding-left: 2px; }
.iconfield input { margin-left: 3px; flex: 1; }
.colorrow { display: flex; align-items: center; padding: 2px 12px 1px 10px; }
.colorrow .ic { margin-left: auto; }
.vtabs { width: 12px; flex: none; background: #272727; padding: 4px 1px 0 0; display: flex; flex-direction: column; gap: 4px; }
.vtabs button { writing-mode: vertical-rl; text-orientation: sideways; transform: rotate(180deg); width: 11px; padding: 4px 0; border-radius: 3px 0 0 3px; background: #2d2d2d; color: #bbb; }
.vtabs .on { background: #424242; color: #e6e6e6; }

.timeline { flex: none; display: flex; flex-direction: column; height: 46px; background: #303030; }
.timeline .bar { height: 17px; background: #363636; padding: 0 2px 0 6px; gap: 4px; }
.play { width: 29px; } .keying { width: 50px; }
.timeline .flatmenus { margin-left: 0; }
.transport { display: flex; gap: 5px; margin: 0 auto; padding-right: 14px; }
.transport .b { color: #eee; }
.flip svg, .flipx { transform: scaleX(-1); }
.num { --f: #545454; height: 12px; text-align: center; border-radius: 2px; background: linear-gradient(90deg, #4f79bd var(--v, 0%), var(--f) var(--v, 0%)); font-family: "DejaVu Sans", sans-serif; color: #dcdcdc; }
.frame { width: 46px; }
.range { width: 54px; height: 12px; padding: 0 8px; display: flex; justify-content: space-between; background: #545454; border-left: 1px solid #444; white-space: nowrap; }
.range input { width: 20px; text-align: right; font-family: "DejaVu Sans", sans-serif; }
.frames { flex: 1; position: relative; display: flex; flex-direction: column; }
.ruler { height: 14px; display: grid; grid-template-columns: repeat(25, 1fr); padding: 0 17px 0 52px; background: #292929; text-align: center; line-height: 14px; color: #a6a6a6; font-family: "DejaVu Sans", sans-serif; }
.track { flex: 1; position: relative; background: #3a3a3a; background-image: linear-gradient(90deg, #2f2f2f 1px, transparent 1px); background-size: calc((100% - 69px) / 50) 100%; background-position: 15px 0; }
.scroll { position: absolute; left: 5px; right: 4px; bottom: 2px; height: 6px; border-radius: 3px; background: #636363; border: 1px solid #4a4a4a; }
.playhead { position: absolute; left: 29px; top: 1px; width: 15px; height: 12px; border-radius: 2px; background: #4f79bd; color: #fff; text-align: center; }
.playhead::after { content: ""; position: absolute; left: 7px; top: 12px; width: 1px; height: 10px; background: #4f79bd; }

.outliner { flex: none; height: 192px; display: flex; flex-direction: column; background: #282828; }
.outliner .bar { height: 16px; padding: 0 5px 0 6px; }
.search { display: flex; align-items: center; width: 68px; height: 12px; background: #1d1d1d; border-radius: 2px; padding-left: 2px; }
.search input { flex: 1; }
.outliner .search { margin-left: 8px; }
.filt { margin-left: auto; }
.list { flex: 1; display: grid; grid-auto-rows: 1fr; }
.list li { display: flex; align-items: center; gap: 4px; min-height: 0; padding-right: 6px; position: relative; white-space: nowrap; }
.list li:nth-child(odd) { background: #2b2b2b; }
.list li.active:nth-child(odd) { background: #3a568d; }
.list em { font-style: normal; color: #efb28c; }
.l0 { padding-left: 13px; }
.l1 { padding-left: 16px; }
.list .l2 { padding-left: 31px; gap: 3px; }
.l2::before { content: ""; position: absolute; left: 18px; top: 0; bottom: 0; border-left: 1px solid #555; }
.chip { width: 12px; height: 12px; border-radius: 2px; background: #555; display: grid; place-items: center; }
.kind { width: 12px; }
.active .chip { background: #7c6f70; }
.chip.green { background: #2b6353; color: #35b58b; }
.data { margin-left: 10px; }
.eye, .vis { margin-left: auto; }
.vis { background-color: #555; }
.ring { left: 21px; top: -8px; width: 84px; height: 28px; }
.mark.ring, .mark.ring2 { border: 0; fill: none; stroke: #d4262d; stroke-width: 3; overflow: visible; z-index: 1; }

.properties { flex: 1; min-height: 0; display: flex; flex-direction: column; background: #424242; }
.properties .bar { padding-left: 6px; }
.properties .search { margin-left: 39px; }
.pbody { flex: 1; min-height: 0; display: flex; overflow: hidden; }
.ptabs { width: 17px; flex: none; background: #222; padding: 5px 0 0 1px; display: flex; flex-direction: column; gap: 4px; }
.ptabs div { display: grid; gap: 1px; }
.ptabs button { height: 17px; background: #2b2b2b; border-radius: 3px 0 0 3px; }
.ptabs button.on { background: #424242; }
.pcontent { flex: 1; min-width: 0; display: flex; flex-direction: column; }
.crumb { display: flex; align-items: center; gap: 4px; padding: 6px 2px 6px 6px; height: 24px; flex: none; }
.sep { margin: 0 5px; color: #888; }
.crumb .pinned { margin-left: auto; }
.slots, .matrow { display: flex; padding: 0 5px 0 6px; gap: 7px; flex: none; }
.slots { margin-top: 5px; }
.slotbox { flex: 1; height: 49px; background: #333; border-radius: 2px; padding: 3px; position: relative; display: flex; flex-direction: column; justify-content: space-between; }
.slotrow { height: 12px; display: flex; align-items: center; gap: 5px; background: #5f656f; padding-left: 1px; color: #eee; border-radius: 1px; }
.ball { width: 8px; height: 8px; border-radius: 50%; background: radial-gradient(circle at 35% 40%, #fff, #c8c8c8 60%, #888); }
.slotfoot { display: flex; padding: 0 66px 0 5px; justify-content: space-between; align-items: center; }
.ring2 { left: -5px; top: -6px; width: 60px; height: 32px; }
.slotbtns { width: 11px; }
.slotbtns .b { width: 11px; margin-bottom: 1px; }
.slotbtns .gap { margin-top: 5px; }
.matrow { margin: 4px 0 6px; }
.matrow .idblock { flex: 1; }
.matrow .field { flex: 1; }
.pcontent h2 { flex: none; }
.surface { flex: 1; min-height: 0; overflow: hidden; background: #383838; padding: 5px 5px 0 6px; }
.usenodes { width: 100%; padding-left: 2px; justify-content: flex-start; margin-bottom: 10px; }
.prow { position: relative; display: grid; grid-template-columns: 61px 17px 1fr 12px; margin-bottom: 4px; align-items: center; min-height: 12px; }
.prow label { white-space: nowrap; justify-self: end; }
.prow .sock { margin-left: 5px; }
.first { margin-bottom: 10px; }
.surf, .nolabel .sel { grid-column: 2 / 4; margin-left: 5px; justify-content: flex-start; }
.nolabel .key { grid-column: 4; }
.surf { gap: 5px; padding-left: 4px; }
.sock { height: 12px; background: #2b2b2b; display: grid; place-items: center; border-radius: 2px 0 0 2px; --s: #a8a8a8; }
.sock::before, .dot { content: ""; width: 4px; height: 4px; border-radius: 50%; background: var(--s); }
.yel { --s: #c7c743; } .pur { --s: #6363c7; } .lime { --s: #63c763; }
.prow .num { width: 100%; }
.swatch { height: 12px; background: #e7e7e7; }
.key { justify-self: end; width: 2px; height: 2px; margin-right: 4px; border-radius: 50%; background: #ddd; }
.prow.triple { align-items: start; margin-bottom: 3px; }
.triple .stack { display: grid; margin-left: 4px; }
.stack .num + .num { border-top: 1px solid #454545; }
.keys { display: grid; gap: 10px; padding-top: 5px; justify-self: end; }
.markrow { left: 19px; right: 5px; top: -5px; height: 22px; border-width: 3px; }

.status { height: 13px; flex: none; display: flex; align-items: center; background: #303030; color: #bbb; padding: 0 9px 0 6px; }
.status span { display: flex; align-items: center; gap: 5px; white-space: nowrap; }
.s2 { margin-left: 7px; } .s3 { margin-left: 56px; } .s4 { margin-left: 98px; }
.status .ver { margin-left: auto; font-family: "DejaVu Sans", sans-serif; }
```
FILE: floor.js
```js
// Perspective floor grid: vanishing points of the X and Y axes, one line per metre.
const origin = [249, 318.5], vx = [-128, -44], vy = [981, -57];
const ax = -0.168, ay = 0.1203;
function project(a, b) {
  const w = 1 + a * ax + b * ay;
  return [(origin[0] + a * ax * vx[0] + b * ay * vy[0]) / w, (origin[1] + a * ax * vx[1] + b * ay * vy[1]) / w, w];
}
const floor = document.getElementById('floor');
function line(from, to) {
  const steps = 480;
  let d = '';
  for (let i = 0; i <= steps; i++) {
    const t = i / steps;
    const p = project(from[0] + (to[0] - from[0]) * t, from[1] + (to[1] - from[1]) * t);
    if (p[2] < 0.1) continue;
    d += (d ? 'L' : 'M') + p[0].toFixed(1) + ' ' + p[1].toFixed(1);
  }
  const path = document.createElementNS('http://www.w3.org/2000/svg', 'path');
  path.setAttribute('d', d);
  path.setAttribute('fill', 'none');
  path.setAttribute('stroke', '#4a4a4a');
  floor.append(path);
}
for (let k = -24; k <= 24; k++) {
  if (k === 0) continue;
  line([k, -24], [k, 24]);
  line([-24, k], [24, k]);
}
```
